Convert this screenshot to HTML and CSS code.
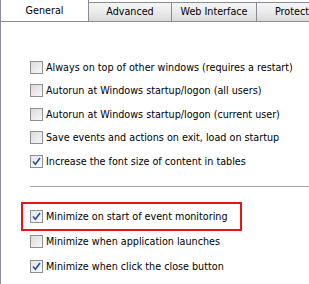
FILE: index.html
```html
<!DOCTYPE html>
<html lang="en">

<head>
    <meta charset="UTF-8">
    <title>Options</title>
    <link rel="stylesheet" href="styles.css">
</head>

<body>
    <div class="window">
        <div class="tabs">
            <div class="tab active">General</div>
            <div class="tab tab-advanced">Advanced</div>
            <div class="tab tab-web">Web Interface</div>
            <div class="tab tab-protect">Protection</div>
        </div>

        <div class="panel">
            <div class="group">
                <label class="option"><span class="box"></span>Always on top of other windows (requires a restart)</label>
                <label class="option"><span class="box"></span>Autorun at Windows startup/logon (all users)</label>
                <label class="option"><span class="box"></span>Autorun at Windows startup/logon (current user)</label>
                <label class="option"><span class="box"></span>Save events and actions on exit, load on startup</label>
                <label class="option"><span class="box checked"><svg viewBox="0 0 9 9" width="9" height="9"><path d="M1 4.5 L3.4 7.2 L8 1" fill="none" stroke="#2b4ba3" stroke-width="1.6"/></svg></span>Increase the font size of content in tables</label>
            </div>

            <div class="separator"></div>

            <div class="group group-bottom">
                <div class="highlight">
                    <label class="option"><span class="box checked"><svg viewBox="0 0 9 9" width="9" height="9"><path d="M1 4.5 L3.4 7.2 L8 1" fill="none" stroke="#2b4ba3" stroke-width="1.6"/></svg></span>Minimize on start of event monitoring</label>
                </div>
                <label class="option"><span class="box"></span>Minimize when application launches</label>
                <label class="option"><span class="box checked"><svg viewBox="0 0 9 9" width="9" height="9"><path d="M1 4.5 L3.4 7.2 L8 1" fill="none" stroke="#2b4ba3" stroke-width="1.6"/></svg></span>Minimize when click the close button</label>
            </div>
        </div>
    </div>
</body>

</html>
```

FILE: styles.css
```css
* {
    margin: 0;
    padding: 0;
    box-sizing: border-box;
}

body {
    width: 309px;
    height: 284px;
    overflow: hidden;
    background-color: #ffffff;
    font-family: "DejaVu Sans Condensed", "Liberation Sans", sans-serif;
    font-size: 10.7px;
    color: #000;
}

.window {
    width: 309px;
    height: 284px;
    display: flex;
    flex-direction: column;
}

.tabs {
    display: flex;
    align-items: flex-end;
    height: 22px;
    border-bottom: 1px solid #898c95;
    white-space: nowrap;
    overflow: hidden;
    flex-shrink: 0;
}

.tab {
    height: 19px;
    line-height: 17px;
    text-align: center;
    border: 1px solid #898c95;
    border-bottom: none;
    border-left: none;
    background: linear-gradient(#f5f5f5, #ebebeb 50%, #dadada);
    flex-shrink: 0;
}

.tab.active {
    width: 89px;
    height: 23px;
    line-height: 22px;
    margin-bottom: -1px;
    background: #ffffff;
    border-left: 1px solid #898c95;
    border-top-color: #c9c9c9;
}

.tab-advanced {
    width: 83px;
}

.tab-web {
    width: 85px;
}

.tab-protect {
    width: 80px;
    text-align: left;
    padding-left: 18px;
}

.panel {
    flex: 1;
    border-left: 1px solid #898c95;
    padding-top: 37px;
}

.group {
    display: flex;
    flex-direction: column;
    gap: 7.5px;
}

.option {
    display: flex;
    align-items: center;
    height: 16px;
    padding-left: 29px;
    white-space: nowrap;
}

.box {
    width: 13px;
    height: 13px;
    margin-right: 3px;
    border: 1px solid #8f8f8f;
    background: linear-gradient(135deg, #dcdcdc, #f7f7f7);
    display: flex;
    align-items: center;
    justify-content: center;
    flex-shrink: 0;
}

.box.checked {
    background: linear-gradient(135deg, #e2e6ee, #f8f9fb);
}

.separator {
    margin: 17px 0 0 29px;
    height: 1px;
    background-color: #a0a0a0;
}

.group-bottom {
    margin-top: 15px;
    gap: 9px;
}

.highlight {
    width: 221px;
    height: 29px;
    margin-left: 20px;
    margin-bottom: -7px;
    border: 2px solid #e8141b;
    display: flex;
    align-items: center;
}

.highlight .option {
    padding-left: 7px;
}
```
